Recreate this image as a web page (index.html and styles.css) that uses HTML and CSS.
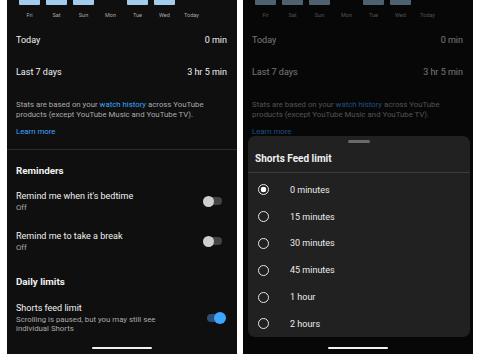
FILE: index.html
```html
<!DOCTYPE html>
<html lang="en">
<head>
<meta charset="utf-8">
<title>Time watched</title>
<link rel="stylesheet" href="styles.css">
</head>
<body>
<div class="screens">
  <div class="phone">
    <div class="content">
      <div class="chart">
        <div class="col"><div class="bar"></div><span>Fri</span></div>
        <div class="col"><div class="bar"></div><span>Sat</span></div>
        <div class="col"><div class="bar"></div><span>Sun</span></div>
        <div class="col"><div class="bar empty"></div><span>Mon</span></div>
        <div class="col"><div class="bar"></div><span>Tue</span></div>
        <div class="col"><div class="bar"></div><span>Wed</span></div>
        <div class="col"><div class="bar empty"></div><span>Today</span></div>
      </div>
      <div class="stat"><span>Today</span><span>0 min</span></div>
      <div class="stat"><span>Last 7 days</span><span>3 hr 5 min</span></div>
      <p class="note">Stats are based on your <span class="link">watch history</span> across YouTube products (except YouTube Music and YouTube TV).</p>
      <p class="learn link">Learn more</p>
      <div class="divider"></div>
      <h2 class="section first">Reminders</h2>
      <div class="row">
        <div class="row-inner">
          <div class="texts"><div class="title">Remind me when it's bedtime</div><div class="sub">Off</div></div>
          <div class="toggle off"><div class="track"></div><div class="knob"></div></div>
        </div>
      </div>
      <div class="row">
        <div class="row-inner">
          <div class="texts"><div class="title">Remind me to take a break</div><div class="sub">Off</div></div>
          <div class="toggle off"><div class="track"></div><div class="knob"></div></div>
        </div>
      </div>
      <h2 class="section second">Daily limits</h2>
      <div class="row">
        <div class="row-inner">
          <div class="texts"><div class="title">Shorts feed limit</div><div class="sub">Scrolling is paused, but you may still see<br>individual Shorts</div></div>
          <div class="toggle on"><div class="track"></div><div class="knob"></div></div>
        </div>
      </div>
    </div>
    <div class="home-bar"></div>
  </div>

  <div class="phone">
    <div class="content">
      <div class="chart">
        <div class="col"><div class="bar"></div><span>Fri</span></div>
        <div class="col"><div class="bar"></div><span>Sat</span></div>
        <div class="col"><div class="bar"></div><span>Sun</span></div>
        <div class="col"><div class="bar empty"></div><span>Mon</span></div>
        <div class="col"><div class="bar"></div><span>Tue</span></div>
        <div class="col"><div class="bar"></div><span>Wed</span></div>
        <div class="col"><div class="bar empty"></div><span>Today</span></div>
      </div>
      <div class="stat"><span>Today</span><span>0 min</span></div>
      <div class="stat"><span>Last 7 days</span><span>3 hr 5 min</span></div>
      <p class="note">Stats are based on your <span class="link">watch history</span> across YouTube products (except YouTube Music and YouTube TV).</p>
      <p class="learn link">Learn more</p>
    </div>
    <div class="scrim"></div>
    <div class="sheet">
      <div class="handle"></div>
      <div class="sheet-title">Shorts Feed limit</div>
      <div class="sheet-divider"></div>
      <div class="options">
        <div class="option"><span class="radio checked"></span><span>0 minutes</span></div>
        <div class="option"><span class="radio"></span><span>15 minutes</span></div>
        <div class="option"><span class="radio"></span><span>30 minutes</span></div>
        <div class="option"><span class="radio"></span><span>45 minutes</span></div>
        <div class="option"><span class="radio"></span><span>1 hour</span></div>
        <div class="option"><span class="radio"></span><span>2 hours</span></div>
      </div>
    </div>
    <div class="home-bar front"></div>
  </div>
</div>
</body>
</html>
```

FILE: styles.css
```css
* { box-sizing: border-box; }
html, body { margin: 0; padding: 0; background: #ffffff; }
body {
  font-family: "Roboto", "Liberation Sans", sans-serif;
  width: 480px;
  height: 360px;
  overflow: hidden;
}
.screens {
  display: flex;
  gap: 6px;
  padding-left: 7px;
}
.phone {
  position: relative;
  width: 230px;
  height: 354px;
  background: #0f0f0f;
  display: flex;
  flex-direction: column;
  overflow: hidden;
}
.content {
  flex: 1;
  padding: 0 10px 0 9px;
  color: #f1f1f1;
}
.chart {
  display: grid;
  grid-template-columns: repeat(7, 27px);
  height: 24px;
}
.col {
  display: flex;
  flex-direction: column;
  align-items: center;
}
.bar {
  width: 21px;
  height: 5px;
  background: #a3cbeb;
  border-radius: 0 0 1px 1px;
}
.bar.empty { background: transparent; }
.col span {
  margin-top: 5.5px;
  font-size: 5.5px;
  line-height: 9px;
  color: #a8a8a8;
}
.stat {
  height: 32px;
  display: flex;
  justify-content: space-between;
  align-items: center;
  font-size: 9px;
}
.note {
  margin: 0;
  padding-top: 12px;
  font-size: 7.8px;
  line-height: 10px;
  color: #aaaaaa;
}
.link { color: #3ea6ff; }
.learn {
  margin: 7px 0 0;
  font-size: 7.8px;
  line-height: 10px;
}
.divider {
  height: 1px;
  background: #2b2b2b;
  margin: 11.5px -10px 0 -9px;
}
.section {
  margin: 0;
  font-size: 9.8px;
  font-weight: 700;
  line-height: 12px;
}
.section.first { padding: 15px 0 8.5px; }
.section.second { padding: 10.5px 0 9.5px; }
.row {
  height: 40px;
  padding-top: 5px;
}
.row-inner {
  display: flex;
  justify-content: space-between;
  align-items: center;
}
.title {
  font-size: 9px;
  line-height: 12px;
}
.sub {
  font-size: 7.8px;
  line-height: 9px;
  margin-top: 1px;
  color: #aaaaaa;
}
.toggle {
  position: relative;
  width: 20px;
  height: 12px;
}
.toggle .track {
  position: absolute;
  top: 2px;
  width: 17px;
  height: 8px;
  border-radius: 4px;
}
.toggle .knob {
  position: absolute;
  top: 0.5px;
  width: 11px;
  height: 11px;
  border-radius: 50%;
}
.toggle.off { margin-right: 4.5px; }
.toggle.off .track { left: 2px; background: #444444; }
.toggle.off .knob { left: 0; background: #cfcfcf; }
.toggle.on { margin-right: 1px; }
.toggle.on .track { left: 1px; background: #2d4f73; }
.toggle.on .knob { left: 8px; top: 0; width: 12px; height: 12px; background: #3ea6ff; }
.home-bar {
  width: 60px;
  height: 2.5px;
  border-radius: 2px;
  background: #f1f1f1;
  margin: 0 auto 5px;
}
.home-bar.front { position: relative; z-index: 3; }
.scrim {
  position: absolute;
  inset: 0;
  background: rgba(0, 0, 0, 0.52);
  z-index: 1;
}
.sheet {
  position: absolute;
  top: 136px;
  left: 5px;
  right: 3px;
  height: 201px;
  background: #212121;
  border-radius: 7px;
  z-index: 2;
  color: #ececec;
}
.handle {
  width: 22px;
  height: 2.5px;
  border-radius: 2px;
  background: #6a6a6a;
  margin: 4px auto 0;
}
.sheet-title {
  margin-top: 9px;
  padding-left: 7px;
  font-size: 10px;
  font-weight: 700;
  line-height: 13px;
  color: #f1f1f1;
}
.sheet-divider {
  height: 1px;
  background: #3a3a3a;
  margin-top: 7.5px;
}
.options { padding-top: 3.5px; }
.option {
  height: 26.8px;
  display: flex;
  align-items: center;
  font-size: 9px;
}
.radio {
  width: 11px;
  height: 11px;
  border-radius: 50%;
  border: 1.3px solid #e6e6e6;
  margin: 0 21.5px 0 9.5px;
  flex: none;
}
.radio.checked {
  background: radial-gradient(circle, #ffffff 0 2.6px, transparent 3.1px);
}
```
